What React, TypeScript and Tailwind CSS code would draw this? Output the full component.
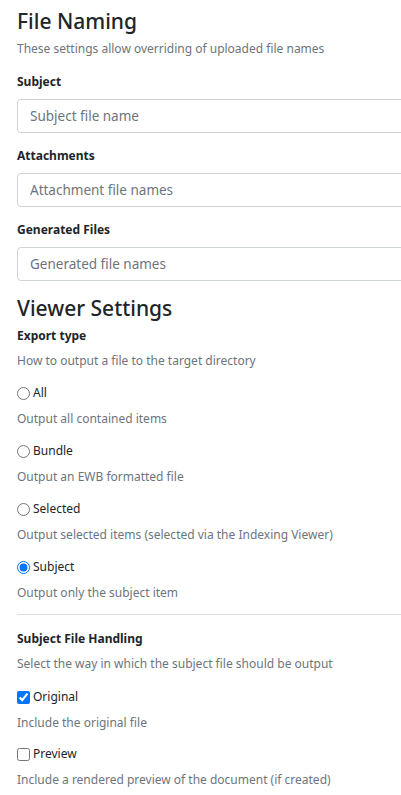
import React from "react";

const font = { fontFamily: '"Segoe UI", "Noto Sans", "Open Sans", sans-serif' };

function TextField({ label, placeholder }: { label: string; placeholder: string }) {
  return (
    <div className="flex flex-col">
      <label className="mb-[7px] text-[12px] font-bold leading-[20px] text-[#212529]">{label}</label>
      <input
        type="text"
        placeholder={placeholder}
        className="h-[34px] w-[440px] rounded-[4px] border border-[#ced4da] bg-white px-[12px] text-[13.5px] text-[#212529] outline-none placeholder:text-[#6c757d]"
      />
    </div>
  );
}

function Choice({
  type,
  name,
  label,
  hint,
  checked,
}: {
  type: "radio" | "checkbox";
  name: string;
  label: string;
  hint: string;
  checked?: boolean;
}) {
  return (
    <div className="flex flex-col">
      <label className="flex h-[20px] items-center gap-[3px] text-[12px] leading-[20px] text-[#212529]">
        <input
          type={type}
          name={name}
          defaultChecked={checked}
          className="m-0 h-[13px] w-[13px] accent-[#0075ff]"
        />
        <span>{label}</span>
      </label>
      <p className="mt-[6px] text-[12px] leading-[20px] text-[#6c757d]">{hint}</p>
    </div>
  );
}

export default function App() {
  return (
    <div className="w-[401px] overflow-hidden bg-white" style={font}>
      <div className="w-[460px] pl-[17px] pt-[6px] pb-[8px]">
        <h2 className="text-[21px] font-medium leading-[30px] text-[#212529]">File Naming</h2>
        <p className="mt-[3px] text-[12px] leading-[20px] text-[#6c757d]">
          These settings allow overriding of uploaded file names
        </p>

        <div className="mt-[13px] flex flex-col gap-[13px]">
          <TextField label="Subject" placeholder="Subject file name" />
          <TextField label="Attachments" placeholder="Attachment file names" />
          <TextField label="Generated Files" placeholder="Generated file names" />
        </div>

        <h2 className="mt-[12px] text-[21px] font-medium leading-[30px] text-[#212529]">Viewer Settings</h2>
        <div className="mt-[3px] text-[12px] font-bold leading-[20px] text-[#212529]">Export type</div>
        <p className="mt-[5px] text-[12px] leading-[20px] text-[#6c757d]">How to output a file to the target directory</p>

        <div className="mt-[12px] flex flex-col gap-[12px]">
          <Choice type="radio" name="export" label="All" hint="Output all contained items" />
          <Choice type="radio" name="export" label="Bundle" hint="Output an EWB formatted file" />
          <Choice
            type="radio"
            name="export"
            label="Selected"
            hint="Output selected items (selected via the Indexing Viewer)"
          />
          <Choice type="radio" name="export" label="Subject" hint="Output only the subject item" checked />
        </div>

        <hr className="mt-[11px] border-t border-[#e0e0e0]" />

        <div className="mt-[14px] text-[12px] font-bold leading-[20px] text-[#212529]">Subject File Handling</div>
        <p className="mt-[5px] text-[12px] leading-[20px] text-[#6c757d]">
          Select the way in which the subject file should be output
        </p>

        <div className="mt-[13px] flex flex-col gap-[11px]">
          <Choice type="checkbox" name="original" label="Original" hint="Include the original file" checked />
          <Choice
            type="checkbox"
            name="preview"
            label="Preview"
            hint="Include a rendered preview of the document (if created)"
          />
        </div>
      </div>
    </div>
  );
}
